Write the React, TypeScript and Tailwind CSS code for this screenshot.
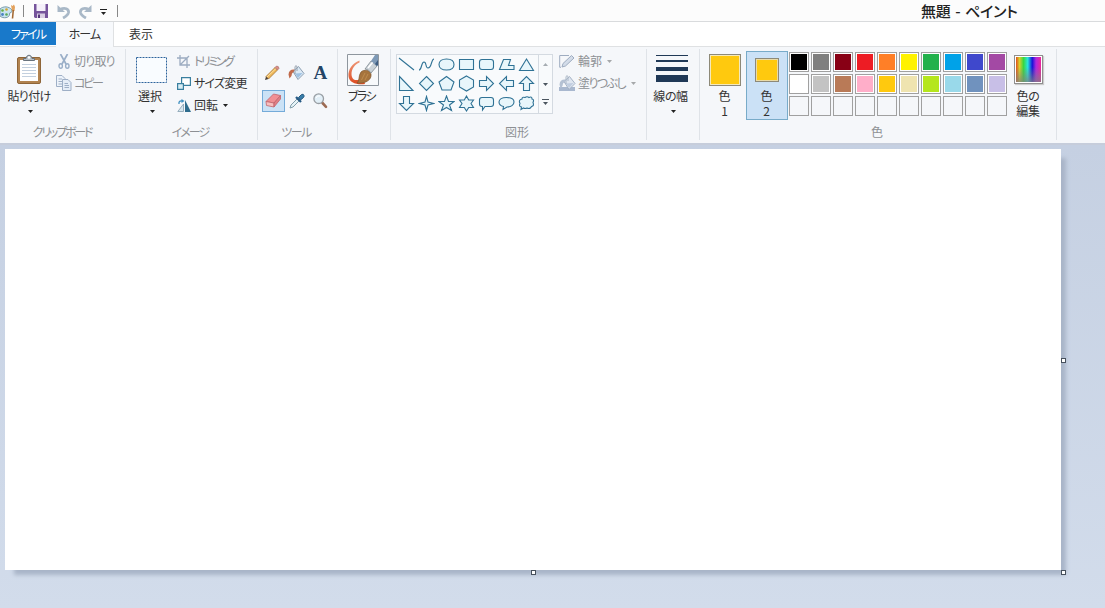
import React from 'react';

type Item = { children?: React.ReactNode; className?: string };

const SWATCHES = [
  '#000000', '#7f7f7f', '#880015', '#ed1c24', '#ff7f27', '#fff200', '#22b14c', '#00a2e8', '#3f48cc', '#a349a4',
  '#ffffff', '#c3c3c3', '#b97a57', '#ffaec9', '#ffc90e', '#efe4b0', '#b5e61d', '#99d9ea', '#7092be', '#c8bfe7',
  '', '', '', '', '', '', '', '', '', '',
];

const SHAPES = [
  'M1 2L16 14',
  'M1 14C4 14 3 6 6 6C9 6 7 12 10 12C14 12 13 3 16 3',
  'M8.5 3C13 3 16 5 16 8.500C16 12 13 14 8.500 14C4 14 1 12 1 8.500C1 5 4 3 8.500 3Z',
  'M1.500 3.500H15.500V13.500H1.500Z',
  'M4 3.500H13Q15.500 3.500 15.500 6V11Q15.500 13.500 13 13.500H4Q1.500 13.500 1.500 11V6Q1.500 3.500 4 3.500Z',
  'M5.500 3.500H12.500L10.500 9.500H16V13.500H1.500Z',
  'M8.5 3L15.500 14.500H1.500Z',
  'M1.500 1.500L15 15.500H1.500Z',
  'M8.500 1.500L15.500 8.500L8.500 15.500L1.500 8.500Z',
  'M8.500 1.500L16 7L13 15H4L1 7Z',
  'M8.500 1L15.500 5V12L8.500 16L1.500 12V5Z',
  'M1.500 5.500H8.500V1.500L15.500 8.500L8.500 15.500V11.500H1.500Z',
  'M15.500 5.500H8.500V1.500L1.500 8.500L8.500 15.500V11.500H15.500Z',
  'M5.500 15.500V8.500H1.500L8.500 1.500L15.500 8.500H11.500V15.500Z',
  'M5.500 1.500V8.500H1.500L8.500 15.500L15.500 8.500H11.500V1.500Z',
  'M8.500 1.500L10 7L15.500 8.500L10 10L8.500 15.500L7 10L1.500 8.500L7 7Z',
  'M8.500 1L10.500 6.500H16L11.500 10L13.500 15.500L8.500 12.500L3.500 15.500L5.500 10L1 6.500H6.500Z',
  'M8.500 1L10.700 5H15.500L13 8.500L15.500 12.500H10.700L8.500 16L6.300 12.500H1.500L4 8.500L1.500 5H6.300Z',
  'M4 2.500H13Q15.500 2.500 15.500 5V9Q15.500 11.500 13 11.500H7L4.500 15V11.500H4Q1.500 11.500 1.500 9V5Q1.500 2.500 4 2.500Z',
  'M8.500 2.500C13 2.500 16 4 16 7C16 10 13 12 9 12L5 14.500L5.500 11.500C3 11 1 9.500 1 7C1 4 4 2.500 8.500 2.500Z',
  'M4 4Q4 1.500 7 2.500Q9 1 11 2.500Q14 1 14 4Q16.500 4.500 15 7.500Q16.500 11 13.500 11.500Q12 14.500 9 13Q7 14 5.500 13L3 14.500L3.500 12Q.5 11.500 2 8.500Q0 5 4 4Z',
];

function Arrow({ className = 'text-[#222]' }: Item) {
  return (
    <svg className={`shrink-0 ${className}`} width="5" height="3" viewBox="0 0 5 3">
      <path d="M0 0H5L2.500 3Z" fill="currentColor" />
    </svg>
  );
}

// リボンのグループ
function Group({ label, className = '', labelClass = '', children }: Item & { label?: string; labelClass?: string }) {
  return (
    <section className={`flex h-full shrink-0 flex-col ${className}`}>
      <div className="flex h-[77px] shrink-0 items-start">{children}</div>
      <div className={`h-4 whitespace-nowrap text-center text-[12px] leading-4 text-[#8d9094] ${labelClass}`}>{label}</div>
    </section>
  );
}

function Divider() {
  return <div className="-ml-px mt-0.5 h-[91px] w-px shrink-0 bg-[#dfe3e8]" />;
}

function PaletteIcon() {
  return (
    <svg width="17" height="17" viewBox="0 0 17 17">
      <path d="M0 6C3 3 9 3 12 7C13 10 9 9 9.500 11C10 15 3 16 0 13Z" fill="#c9e4ef" stroke="#7b9caa" />
      <circle cx="2.500" cy="7.500" r="1.300" fill="#65ad45" />
      <circle cx="6.500" cy="6.500" r="1.300" fill="#d4a42f" />
      <circle cx="2.500" cy="11.500" r="1.400" fill="#4a81c4" />
      <circle cx="6.500" cy="11.500" r="1.300" fill="#5aa95a" />
      <path d="M11 2L12.500 3L14 1.500L15 4L14.500 8H12Z" fill="#e3a15c" />
      <path d="M13.300 7L12.500 15.500" stroke="#a36934" strokeWidth="1.600" />
    </svg>
  );
}

function SaveIcon() {
  return (
    <svg width="14" height="14" viewBox="0 0 14 14">
      <path d="M0 0H14V14H1L0 13Z" fill="#76549b" />
      <path d="M2.500 0H11.500V7H2.500Z" fill="#f5f0fa" />
      <path d="M3 9.500H11V14H3Z" fill="#d9cfe3" />
      <path d="M4 10.500H6V14H4Z" fill="#56377b" />
    </svg>
  );
}

function UndoIcon({ className = '' }: Item) {
  return (
    <svg className={className} width="14" height="15" viewBox="0 0 14 15">
      <path d="M3 5.500C8 3 12 5 11.500 8.500C11 11 9 12.500 6 14" fill="none" stroke="#a9b8c7" strokeWidth="2.800" />
      <path d="M.5 1V8H8Z" fill="#a9b8c7" />
    </svg>
  );
}

function ClipboardIcon() {
  return (
    <svg className="ml-0.5" width="26" height="31" viewBox="0 0 26 31">
      <rect x="1.500" y="3.500" width="23" height="26" rx="1.500" fill="#b18350" stroke="#8e6538" />
      <path d="M4 6H22V27H4Z" fill="#fff" />
      <path d="M6 10.500H20M6 13.500H20M6 16.500H20M6 19.500H20M6 22.500H20" stroke="#c3d0df" />
      <path d="M7.500 6.500V4.500H10C10.500 .2 15.500 .2 16 4.500H18.500V6.500Z" fill="#b6bfc7" stroke="#69737d" />
      <circle cx="13" cy="3.500" r="1.200" fill="#fff" />
    </svg>
  );
}

function CutIcon() {
  return (
    <svg width="12" height="15" viewBox="0 0 12 15" fill="none" stroke="#9aafc8">
      <path d="M2.500 0L8 10M9.500 0L4 10" strokeWidth="1.700" />
      <ellipse cx="2.700" cy="12" rx="1.700" ry="2.200" strokeWidth="1.400" />
      <ellipse cx="9.300" cy="12" rx="1.700" ry="2.200" strokeWidth="1.400" />
    </svg>
  );
}

function CopyIcon() {
  return (
    <svg width="16" height="16" viewBox="0 0 16 16" stroke="#9eafc6">
      <path d="M.5.5H6L9 3.500V11.500H.5Z" fill="#edf3fa" />
      <path d="M2.500 4H6M2.500 6.500H6M2.500 9H6" />
      <path d="M6.500 4.500H12L15 7.500V15.500H6.500Z" fill="#e5edf7" />
      <path d="M8.500 8.500H12M8.500 10.500H13M8.500 12.500H13" />
    </svg>
  );
}

function CropIcon() {
  return (
    <svg width="13" height="13" viewBox="0 0 13 13" fill="none" stroke="#9cacc1">
      <path d="M3 0V10H13M0 3H10V13M3 10L12 1" strokeWidth="1.300" />
    </svg>
  );
}

function ResizeIcon() {
  return (
    <svg width="14" height="13" viewBox="0 0 14 13" stroke="#397f9f" strokeWidth="1.200">
      <path d="M4.600.6H13.400V8.400H4.600Z" fill="#fff" />
      <path d="M.6 6.600H6.400V12.400H.6Z" fill="#d9eef5" />
    </svg>
  );
}

function RotateIcon() {
  return (
    <svg width="14" height="13" viewBox="0 0 14 13">
      <path d="M6.500 5V12.500H.8Z" fill="#d5e5ee" stroke="#849eb0" strokeWidth=".8" />
      <path d="M8 1V13H14Z" fill="#2e6c8d" />
      <path d="M2 5Q1.500 1.500 5 2" fill="none" stroke="#3f8fc0" strokeWidth="1.300" />
      <path d="M4.500 0L7.500 2L4.500 4Z" fill="#3f8fc0" />
    </svg>
  );
}

function PencilIcon() {
  return (
    <svg className="-ml-1" width="16" height="16" viewBox="0 0 16 16">
      <path d="M2 11.500L11 2.500L13.500 5L4.500 14Z" fill="#eeb759" stroke="#a4763a" strokeWidth=".8" />
      <path d="M3 12L12 3.500" stroke="#ffe3a0" />
      <path d="M11 2.500L12.500 1Q15 1 15 3.500L13.500 5Z" fill="#d98d86" stroke="#a56c64" strokeWidth=".6" />
      <path d="M1 15L2 11.500L4.500 14Z" fill="#4a3f35" />
    </svg>
  );
}

function BucketIcon({ muted = false }: { muted?: boolean }) {
  return (
    <svg width="17" height="16" viewBox="0 0 17 16">
      {muted && <path d="M0 12H16V16H0Z" fill="#a9b8cf" />}
      <path d="M5 6.500L10.500 1.500L16 8.500L10 14.500Z" fill={muted ? '#dfe6f0' : '#dbe9f5'} stroke={muted ? '#9dacc0' : '#8195aa'} strokeWidth=".9" />
      <path d="M7 8.500L14.500 8L10 13Z" fill={muted ? '#c0cde0' : '#9fc2e2'} />
      <path d="M7 9V1.500Q8-.2 9 1.500V6" fill="none" stroke={muted ? '#a2afc0' : '#8c99a6'} strokeWidth=".9" />
      <path d="M6.500 4.500Q1 4 .5 9.500L1.500 13.500Q4.200 11 4 8.500L6 6.500Z" fill={muted ? '#b4c1d3' : '#c16a4b'} />
    </svg>
  );
}

function EraserIcon() {
  return (
    <svg width="17" height="15" viewBox="0 0 17 15" stroke="#c2656c" strokeWidth=".8" strokeLinejoin="round">
      <path d="M1 8.500L8.500 1L15.500 2.500L9 10Z" fill="#f08f94" />
      <path d="M1 8.500L9 10V14L1.500 12.500Z" fill="#f7bfc0" />
      <path d="M9 10L15.500 2.500V6L9 14Z" fill="#e07e85" />
    </svg>
  );
}

function DropperIcon() {
  return (
    <svg width="16" height="16" viewBox="0 0 16 16">
      <path d="M1 15L2 12L8 6L10 8L4 14Z" fill="#e5f2f6" stroke="#7594a2" strokeWidth=".9" />
      <path d="M7 4L12 9" stroke="#275a85" strokeWidth="2.300" />
      <path d="M9.500 4.500L12.500 1.500Q14.500.5 15 2.500Q15.300 3.500 14.500 4.500L11.500 7Z" fill="#387da9" stroke="#24597f" />
    </svg>
  );
}

function MagnifierIcon() {
  return (
    <svg width="15" height="16" viewBox="0 0 15 16">
      <path d="M9.500 10L13 13.800" stroke="#9c6b53" strokeWidth="2.600" strokeLinecap="round" />
      <circle cx="5.700" cy="5.700" r="4.800" fill="#e2eff7" stroke="#989ea3" strokeWidth="1.300" />
      <path d="M3 5Q4 2 7 3" fill="none" stroke="#fff" />
    </svg>
  );
}

function BrushIcon() {
  return (
    <svg className="-ml-1" width="32" height="32" viewBox="0 0 32 32">
      <defs>
        <linearGradient id="stroke" x2="0" y2="1">
          <stop stopColor="#ee9878" />
          <stop offset="1" stopColor="#dc4a20" />
        </linearGradient>
      </defs>
      <path d="M.5.5H31.500V31.500H.5Z" fill="#f7f9fb" stroke="#8e969e" />
      <path d="M12.500 6.500C5 9 1 16 1.500 22C2 29 10 31 18 30L16 24C9 28 4.500 26 4.500 20C4.500 15 8 10 12.500 8.500Z" fill="url(#stroke)" />
      <path d="M10 29C13 27 11 22 14 18C17 15 23 16 24 20C25 26 18 30 10 29Z" fill="#a6743d" stroke="#7f5730" strokeWidth=".7" />
      <path d="M14.500 26L18 19M18 26L21 20" stroke="#c08d4e" />
      <path d="M18 15L24 7L30 12L24 19Q22 15 18 15Z" fill="#cbd3d8" stroke="#737e85" strokeWidth=".7" />
      <path d="M21 14L26 8" stroke="#fff" strokeWidth="1.500" />
      <path d="M24 7L28 1H31V11L30 12Z" fill="#7d99b6" />
      <path d="M28 10L31 6V11L30 12Z" fill="#3e5d80" />
    </svg>
  );
}

function OutlineIcon() {
  return (
    <svg width="16" height="14" viewBox="0 0 16 14" fill="none" stroke="#9eacc0">
      <path d="M10 1.500H.7V13.300H2" />
      <path d="M3 13L4 9.500L12.500 1.500L15 4L6.500 12Z" fill="#d3dce9" />
    </svg>
  );
}

function ShapeGallery() {
  return (
    <div className="ml-[5px] mt-[7px] flex h-[60px] w-[157px] border border-[#d4dae1] bg-[#f8fafc]">
      <div className="grid w-[140px] shrink-0 grid-cols-7 grid-rows-3">
        {SHAPES.map((d, i) => (
          <div key={i} className="flex items-center justify-start">
            <svg width="17" height="17" viewBox="0 0 17 17" className="ml-px">
              <path d={d} fill={i < 2 ? 'none' : '#e8f6fb'} stroke="#2f7295" strokeWidth="1.100" />
            </svg>
          </div>
        ))}
      </div>
      <div className="ml-px flex w-3.5 flex-col items-center border-l border-[#d4dae1] pt-2">
        <Arrow className="rotate-180 text-[#a6acb2]" />
        <Arrow className="mt-[17px] text-[#4b555f]" />
        <div className="mt-[13px] h-px w-[7px] bg-[#4b555f]" />
        <Arrow className="mt-0.5 text-[#4b555f]" />
      </div>
    </div>
  );
}

export default function App() {
  return (
    <div className="flex h-[608px] w-[1105px] flex-col overflow-hidden bg-white font-['Noto_Sans_CJK_JP',sans-serif] text-[12px] leading-4 text-[#333] [font-feature-settings:'palt'_1]">
      <header className="flex h-[22px] shrink-0 items-start border-b border-[#d9dbdd] bg-[#fcfcfc]">
        <div className="flex h-[22px] w-[118px] shrink-0 items-center">
          <PaletteIcon />
          <span className="ml-1.5 h-3 w-px bg-[#888]" />
          <span className="ml-2.5"><SaveIcon /></span>
          <UndoIcon className="ml-[9px]" />
          <UndoIcon className="ml-[7px] -scale-x-100" />
          <div className="ml-2 flex flex-col items-center gap-0.5 pt-0.5">
            <span className="h-px w-[7px] bg-[#222]" />
            <Arrow />
          </div>
          <span className="ml-2.5 h-3 w-px bg-[#888]" />
        </div>
        <h1 className="ml-[803px] whitespace-nowrap text-[15px] font-medium leading-[22px] tracking-[-0.2px] text-[#222] [word-spacing:1.5px]">無題 - ペイント</h1>
      </header>

      <nav className="flex h-[25px] shrink-0 border-b border-[#dfe1e3] text-center leading-6">
        <div className="h-[23px] w-14 bg-[#1979ca] tracking-[-1.8px] text-white">ファイル</div>
        <div className="h-[25px] w-[58px] border-r border-[#dfe1e3] bg-[#f7f9fc] tracking-[-1px]">ホーム</div>
        <div className="w-[54px]">表示</div>
      </nav>

      <main className="flex h-24 shrink-0 bg-[#f5f7fa]">
        <Group label="クリップボード" className="w-[126px]" labelClass="pr-0.5 tracking-[-2.2px]">
          <div className="flex w-14 flex-col items-center pt-[7px]">
            <ClipboardIcon />
            <span className="ml-0.5 mt-[3px] whitespace-nowrap tracking-[-0.7px]">貼り付け</span>
            <Arrow className="ml-1 mt-1.5 text-[#222]" />
          </div>
          <div className="flex flex-col gap-[6px] whitespace-nowrap pt-1.5 text-[#8d9094]">
            <div className="flex items-center"><span className="flex w-[18px] pl-0.5"><CutIcon /></span><span className="tracking-[-0.8px]">切り取り</span></div>
            <div className="flex items-center"><span className="flex w-[18px]"><CopyIcon /></span><span className="tracking-[-2.3px]">コピー</span></div>
          </div>
        </Group>
        <Divider />

        <Group label="イメージ" className="w-[132px]" labelClass="pr-1 tracking-[-1.9px]">
          <div className="flex w-[51px] flex-col items-center pt-2.5">
            <svg width="31" height="26" viewBox="0 0 31 26">
              <path d="M.5.5H30.500V25.500H.5Z" fill="#f9fcff" stroke="#2c639c" strokeDasharray="2 1" />
            </svg>
            <span className="-ml-[3px] mt-[5px]">選択</span>
            <Arrow className="ml-0.5 mt-1.5 text-[#222]" />
          </div>
          <div className="flex flex-col gap-1.5 whitespace-nowrap pt-1.5">
            <div className="flex items-center text-[#8d9094]"><span className="flex w-[17px]"><CropIcon /></span><span className="tracking-[-2.4px]">トリミング</span></div>
            <div className="flex items-center"><span className="flex w-[17px]"><ResizeIcon /></span><span className="tracking-[-0.8px]">サイズ変更</span></div>
            <div className="flex items-center"><span className="flex w-[17px]"><RotateIcon /></span>回転<Arrow className="ml-[5px] text-[#222]" /></div>
          </div>
        </Group>
        <Divider />

        <Group label="ツール" className="w-20" labelClass="pr-1 tracking-[-1.5px]">
          <div className="ml-1 mt-3.5 grid h-[51px] w-[70px] grid-cols-3 grid-rows-[23px_23px] place-items-center gap-y-[5px]">
            <PencilIcon />
            <BucketIcon />
            <span className="font-['Liberation_Serif',serif] text-[19px] font-bold leading-5 text-[#244566]">A</span>
            <div className="flex h-[22px] w-[23px] items-center justify-center border border-[#74abd9] bg-[#cbe2f6]"><EraserIcon /></div>
            <DropperIcon />
            <MagnifierIcon />
          </div>
        </Group>
        <Divider />

        <Group className="w-[53px]">
          <div className="flex w-full flex-col items-center pt-[7px]">
            <BrushIcon />
            <span className="-ml-1.5 mt-0.5 whitespace-nowrap tracking-[-1.6px]">ブラシ</span>
            <Arrow className="mt-1.5 text-[#222]" />
          </div>
        </Group>
        <Divider />

        <Group label="図形" className="w-64" labelClass="pr-1">
          <ShapeGallery />
          <div className="ml-1.5 flex flex-col gap-1.5 whitespace-nowrap pt-1.5 text-[#8d9094]">
            <div className="flex items-center"><span className="flex w-[19px]"><OutlineIcon /></span>輪郭<Arrow className="ml-[5px] text-[#a6a8aa]" /></div>
            <div className="flex items-center"><span className="flex w-[19px]"><BucketIcon muted /></span><span className="tracking-[-1.6px]">塗りつぶし</span><Arrow className="ml-1.5 text-[#a6a8aa]" /></div>
          </div>
        </Group>
        <Divider />

        <Group className="w-[53px]">
          <div className="flex w-full flex-col items-center pt-2">
            <svg className="-ml-1" width="32" height="27" viewBox="0 0 32 27" fill="#203957">
              <path d="M0 0H32V1H0ZM0 5H32V7H0ZM0 12H32V16H0ZM0 20H32V27H0Z" />
            </svg>
            <span className="-ml-1.5 mt-1.5 whitespace-nowrap tracking-[-0.3px]">線の幅</span>
            <Arrow className="mt-1.5 text-[#222]" />
          </div>
        </Group>
        <Divider />

        <Group label="色" className="w-[357px]" labelClass="pr-[3px]">
          <div className="ml-[9px] flex w-8 flex-col items-center pt-[7px]">
            <div className="h-8 w-8 border border-[#8d8978] bg-[#ffc90e] shadow-[inset_0_0_0_1px_#f5e9ba]" />
            <span className="-ml-px mt-0.5 text-center leading-[15px]">色<br />1</span>
          </div>
          <div className="ml-[5px] mt-1 flex h-[69px] w-[42px] flex-col items-center border border-[#78abc9] bg-[#cbe1f6] pt-1.5">
            <div className="h-6 w-6 border border-[#8d8978] bg-[#ffc90e] shadow-[inset_0_0_0_1px_#eadba7]" />
            <span className="-ml-px mt-[6px] text-center leading-[15px]">色<br />2</span>
          </div>
          <div className="ml-px mt-[5px] grid grid-cols-10 gap-0.5">
            {SWATCHES.map((color, i) => (
              <div key={i} className={`h-5 w-5 border border-[#a0a0a0] p-px ${color ? 'bg-white' : 'bg-[#f5f7fa]'}`}>
                <div className="h-full w-full" style={{ backgroundColor: color || undefined }} />
              </div>
            ))}
          </div>
          <div className="ml-[5px] flex w-[32px] flex-col items-center pt-2">
            <div className="h-[29px] w-[29px] border border-[#8f8f8f] bg-white p-px shadow-[1px_1px_1px_#ccc]">
              <div className="h-full bg-[linear-gradient(to_top,rgba(128,128,128,0.75),rgba(128,128,128,0)_60%),linear-gradient(to_right,#e0501f,#d8d02b_14%,#38d741_30%,#28e5df_47%,#1712d7_65%,#b128dd_80%,#ec2698)]" />
            </div>
            <span className="mt-1 whitespace-nowrap text-center leading-[15px] tracking-[-0.3px]">色の<br />編集</span>
          </div>
        </Group>
        <Divider />
      </main>

      <div className="relative min-h-0 flex-1 border-t-2 border-[#c6cddb] bg-linear-to-b from-[#c5d0e2] to-[#d2dceb] pl-[5px] pt-1">
        <div className="h-[421px] w-[1056px] bg-white shadow-[7px_7px_4px_-2px_#a9b5c8]" />
        <span className="absolute left-[1061px] top-[213px] h-[5px] w-[5px] border border-[#46505c] bg-white" />
        <span className="absolute left-[531px] top-[425px] h-[5px] w-[5px] border border-[#46505c] bg-white" />
        <span className="absolute left-[1061px] top-[425px] h-[5px] w-[5px] border border-[#46505c] bg-white" />
      </div>
    </div>
  );
}
